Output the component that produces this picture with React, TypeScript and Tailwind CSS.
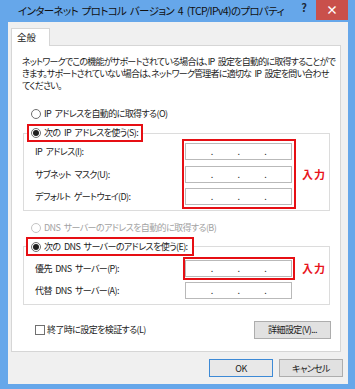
import React from "react";

const font = "font-['Noto_Sans_CJK_JP','Noto_Sans',sans-serif] [font-feature-settings:'palt']";

function Radio({ checked, disabled }: { checked?: boolean; disabled?: boolean }) {
  return (
    <span
      className={`flex h-[10px] w-[10px] shrink-0 items-center justify-center rounded-full border bg-white ${
        disabled ? "border-[#c4c4c4] bg-[#f4f4f4]" : "border-[#6f6f6f]"
      }`}
    >
      {checked ? <span className="h-[6px] w-[6px] rounded-full bg-[#1f1f1f]" /> : null}
    </span>
  );
}

function IpInput() {
  return (
    <div className="flex h-[17px] w-[107px] items-center border border-[#b9b9b9] bg-white">
      <span className="flex-1" />
      <span className="text-[9px] leading-none text-[#333]">.</span>
      <span className="flex-1" />
      <span className="text-[9px] leading-none text-[#333]">.</span>
      <span className="flex-1" />
      <span className="text-[9px] leading-none text-[#333]">.</span>
      <span className="flex-1" />
    </div>
  );
}

function Nyuryoku() {
  return <span className="ml-[10px] text-[11px] font-bold leading-none tracking-[1px] text-[#e8141c]">入力</span>;
}

export default function App() {
  return (
    <div className={`flex h-[389px] w-[355px] flex-col overflow-hidden bg-[#66a7ea] pb-[6px] pl-[8px] pr-[7px] text-[#1b1b1b] [word-spacing:2px] ${font}`}>
      {/* title bar */}
      <div className="-ml-[8px] -mr-[7px] flex h-[22px] items-start">
        <div className="flex h-[22px] flex-1 items-center whitespace-nowrap pl-[18px] text-[10.5px] leading-none tracking-[-0.65px] text-[#111]">
          インターネット プロトコル バージョン 4 (TCP/IPv4)のプロパティ
        </div>
        <div className="mr-[9px] mt-[2px] text-[11px] font-bold leading-none text-[#1b2a3a]">?</div>
        <div className="mr-[7px] flex h-[20px] w-[32px] items-center justify-center bg-[#c9504b] text-[12px] font-bold leading-none text-white">
          ×
        </div>
      </div>

      {/* body */}
      <div className="flex flex-1 flex-col bg-[#f0f0f0] pl-[3px] pr-[7px] pt-[6px] text-[9px] tracking-[-0.6px]">
        {/* tab */}
        <div className="relative z-10 -mb-[1px] flex h-[18px] w-[39px] items-center border border-b-0 border-[#d6d6d6] bg-white pl-[5px] text-[9.5px] leading-none tracking-normal">
          全般
        </div>
        {/* panel */}
        <div className="flex flex-col border border-[#d6d6d6] bg-white pb-[12px] pl-[10px] pr-[10px] pt-[10px] leading-[12px]">
          <p className="whitespace-nowrap tracking-[-0.78px]">
            ネットワークでこの機能がサポートされている場合は、IP 設定を自動的に取得することがで
            <br />
            きます。サポートされていない場合は、ネットワーク管理者に適切な IP 設定を問い合わせ
            <br />
            てください。
          </p>

          <div className="mt-[15px] flex h-[14px] items-center gap-[3px] pl-[9px]">
            <Radio />
            <span>IP アドレスを自動的に取得する(O)</span>
          </div>

          {/* group 1 */}
          <div className="ml-[1px] mt-[12px] flex flex-col border border-[#dcdcdc] pb-[5px]">
            <div className="-mt-[10px] ml-[3px] flex h-[18px] w-fit items-center gap-[3px] border-2 border-[#e60f14] bg-white pl-[2px] pr-[3px]">
              <Radio checked />
              <span className="whitespace-nowrap">次の IP アドレスを使う(S):</span>
            </div>
            <div className="mt-[1px] flex items-center">
              <div className="flex w-[161px] flex-col pl-[11px]">
                <div className="flex h-[17px] items-center">IP アドレス(I):</div>
                <div className="mt-[6px] flex h-[17px] items-center">サブネット マスク(U):</div>
                <div className="mt-[5px] flex h-[17px] items-center">デフォルト ゲートウェイ(D):</div>
              </div>
              <div className="relative flex flex-col">
                <IpInput />
                <div className="mt-[6px]">
                  <IpInput />
                </div>
                <div className="mt-[5px]">
                  <IpInput />
                </div>
                <div className="pointer-events-none absolute -bottom-[4px] -left-[3px] -right-[4px] -top-[4px] border-2 border-[#e60f14]" />
              </div>
              <Nyuryoku />
            </div>
          </div>

          <div className="mt-[10px] flex h-[14px] items-center gap-[3px] pl-[9px] text-[#a2a2a2]">
            <Radio disabled />
            <span>DNS サーバーのアドレスを自動的に取得する(B)</span>
          </div>

          {/* group 2 */}
          <div className="ml-[1px] mt-[11px] flex flex-col border border-[#dcdcdc] pb-[5px]">
            <div className="-mt-[10px] ml-[2px] flex h-[19px] w-fit items-center gap-[3px] border-2 border-[#e60f14] bg-white pl-[3px] pr-[5px]">
              <Radio checked />
              <span className="whitespace-nowrap">次の DNS サーバーのアドレスを使う(E):</span>
            </div>
            <div className="mt-[4px] flex items-center">
              <div className="flex w-[161px] flex-col pl-[11px]">
                <div className="flex h-[17px] items-center">優先 DNS サーバー(P):</div>
              </div>
              <div className="relative">
                <IpInput />
                <div className="pointer-events-none absolute -bottom-[3px] -left-[2px] -right-[3px] -top-[3px] border-2 border-[#e60f14]" />
              </div>
              <Nyuryoku />
            </div>
            <div className="mt-[5px] flex items-center">
              <div className="flex w-[161px] flex-col pl-[11px]">
                <div className="flex h-[17px] items-center">代替 DNS サーバー(A):</div>
              </div>
              <IpInput />
            </div>
          </div>

          <div className="-mr-[1px] mt-[16px] flex items-center justify-between">
            <div className="flex items-center gap-[2px] pl-[13px]">
              <span className="h-[10px] w-[10px] border border-[#707070] bg-white" />
              <span>終了時に設定を検証する(L)</span>
            </div>
            <div className="flex h-[18px] w-[77px] items-center justify-center border border-[#adadad] bg-[#e1e1e1]">
              詳細設定(V)...
            </div>
          </div>
        </div>

        {/* footer */}
        <div className="flex justify-end gap-[6px] pb-[7px] pt-[7px] leading-none">
          <div className="flex h-[18px] w-[64px] items-center justify-center border border-[#3d8ad6] bg-[#e8e8e8]">OK</div>
          <div className="-mr-[2px] flex h-[18px] w-[64px] items-center justify-center border border-[#adadad] bg-[#e1e1e1]">
            キャンセル
          </div>
        </div>
      </div>
    </div>
  );
}
